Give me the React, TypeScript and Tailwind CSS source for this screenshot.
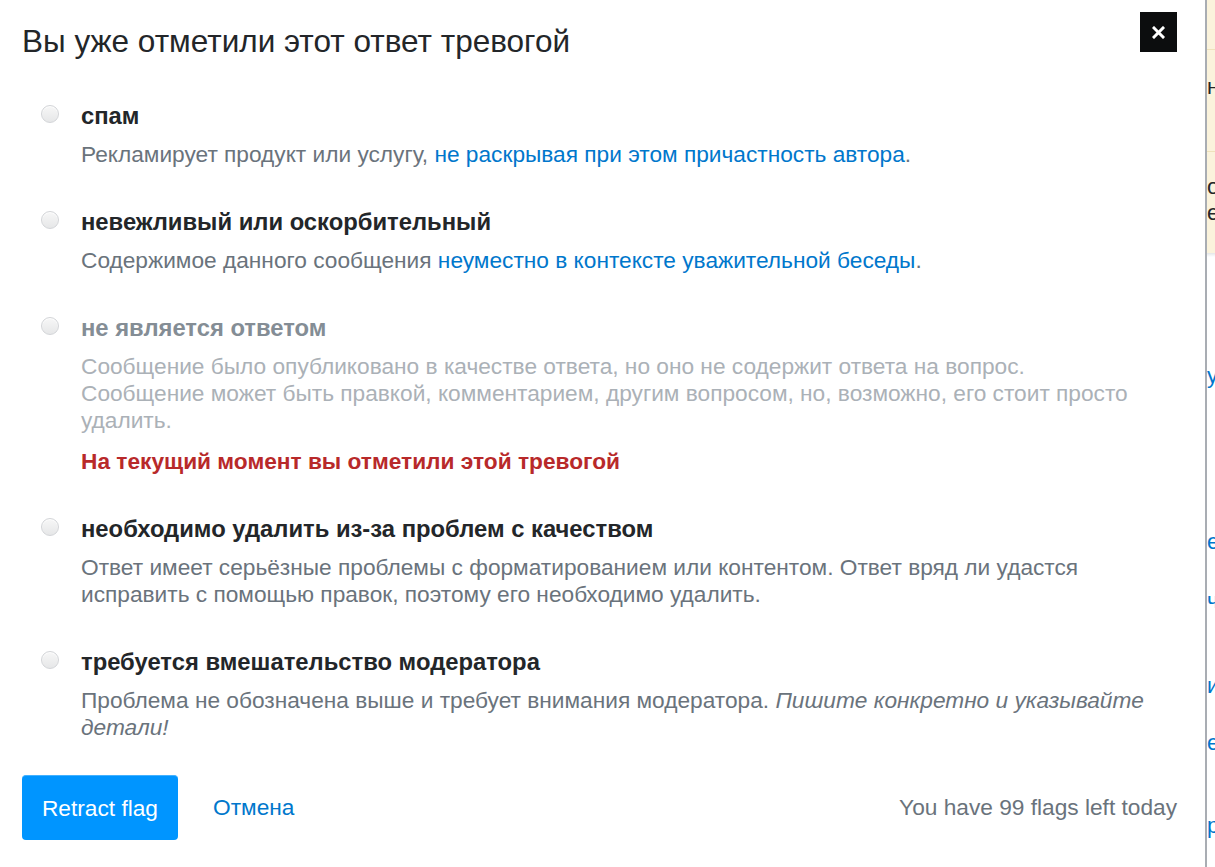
import React from "react";

type Flag = {
  title: string;
  body: React.ReactNode;
  disabled?: boolean;
  note?: string;
};

const flags: Flag[] = [
  {
    title: "спам",
    body: (
      <>
        Рекламирует продукт или услугу,{" "}
        <a className="text-[#0077cc]">не раскрывая при этом причастность автора</a>.
      </>
    ),
  },
  {
    title: "невежливый или оскорбительный",
    body: (
      <>
        Содержимое данного сообщения{" "}
        <a className="text-[#0077cc]">неуместно в контексте уважительной беседы</a>.
      </>
    ),
  },
  {
    title: "не является ответом",
    disabled: true,
    body: (
      <>
        Сообщение было опубликовано в качестве ответа, но оно не содержит ответа на вопрос.
        <br />
        Сообщение может быть правкой, комментарием, другим вопросом, но, возможно, его стоит просто
        удалить.
      </>
    ),
    note: "На текущий момент вы отметили этой тревогой",
  },
  {
    title: "необходимо удалить из-за проблем с качеством",
    body: (
      <>
        Ответ имеет серьёзные проблемы с форматированием или контентом. Ответ вряд ли удастся
        исправить с помощью правок, поэтому его необходимо удалить.
      </>
    ),
  },
  {
    title: "требуется вмешательство модератора",
    body: (
      <>
        Проблема не обозначена выше и требует внимания модератора.{" "}
        <i>Пишите конкретно и указывайте детали!</i>
      </>
    ),
  },
];

function Radio() {
  return (
    <span className="mt-[3px] block h-[18px] w-[18px] shrink-0 rounded-full border border-[#d3d5d8] bg-gradient-to-b from-[#f7f7f7] to-[#e6e7e8] shadow-[inset_0_1px_1px_rgba(255,255,255,0.9)]" />
  );
}

function FlagOption({ flag }: { flag: Flag }) {
  return (
    <div className="flex gap-[22px] pl-[19px]">
      <Radio />
      <div className="flex flex-col">
        <div
          className={
            flag.disabled
              ? "text-[23.8px] font-bold leading-[28px] text-[#848d95]"
              : "text-[23.8px] font-bold leading-[28px] text-[#232629]"
          }
        >
          {flag.title}
        </div>
        <p
          className={
            flag.disabled
              ? "mt-[11px] text-[22.7px] leading-[27px] text-[#abb1b7]"
              : "mt-[11px] text-[22.7px] leading-[27px] text-[#6a737c]"
          }
        >
          {flag.body}
        </p>
        {flag.note && (
          <div className="mt-[13px] text-[22.7px] font-bold leading-[28px] text-[#b8292a]">
            {flag.note}
          </div>
        )}
      </div>
    </div>
  );
}

function PageStrip() {
  return (
    <div className="flex w-[8px] flex-col overflow-hidden whitespace-nowrap text-[22px] leading-[26px]">
      <div className="flex h-[253px] flex-col bg-[#fbf3dc]">
        <div className="h-[50px] border-b border-[#efe2bb]" />
        <div className="h-[102px] border-b border-[#efe2bb] pt-[24px] text-[#242729]">н</div>
        <div className="pt-[22px] text-[#242729]">
          <div>о</div>
          <div>е</div>
        </div>
      </div>
      <div className="h-[4px] bg-gradient-to-b from-[#e4e6e8] to-white" />
      <div className="flex flex-col text-[#0077cc]">
        <div className="mt-[106px]">у</div>
        <div className="mt-[140px]">е</div>
        <div className="mt-[33px]">ч</div>
        <div className="mt-[59px]">и</div>
        <div className="mt-[31px]">е</div>
        <div className="mt-[57px]">р</div>
      </div>
    </div>
  );
}

export default function App() {
  return (
    <div className="flex h-[867px] w-[1215px] overflow-hidden bg-white font-['Liberation_Sans',Arial,sans-serif]">
      <div className="flex w-[1205px] shrink-0 flex-col pl-[22px] pr-[28px] pt-[12px]">
        <div className="flex items-start justify-between">
          <h1 className="mt-[10px] text-[31.5px] font-normal leading-[38px] text-[#232629]">
            Вы уже отметили этот ответ тревогой
          </h1>
          <button className="flex h-[40px] w-[37px] items-center justify-center bg-[#0c0d0e]">
            <svg width="13" height="13" viewBox="0 0 13 13">
              <path d="M2 2L11 11M11 2L2 11" stroke="white" strokeWidth="3" strokeLinecap="square" />
            </svg>
          </button>
        </div>

        <div className="mt-[42px] flex flex-col gap-[40px]">
          {flags.map((f) => (
            <FlagOption key={f.title} flag={f} />
          ))}
        </div>

        <div className="mt-[34px] flex items-center">
          <button className="h-[65px] w-[156px] rounded-[4px] border-t border-[#43b1ff] bg-[#0095ff] text-[22.7px] text-white">
            Retract flag
          </button>
          <a className="ml-[35px] text-[22.7px] text-[#0077cc]">Отмена</a>
          <div className="ml-auto text-[22.7px] text-[#6a737c]">You have 99 flags left today</div>
        </div>
      </div>
      <div className="w-[2px] shrink-0 bg-[#a9adb3]" />
      <PageStrip />
    </div>
  );
}
